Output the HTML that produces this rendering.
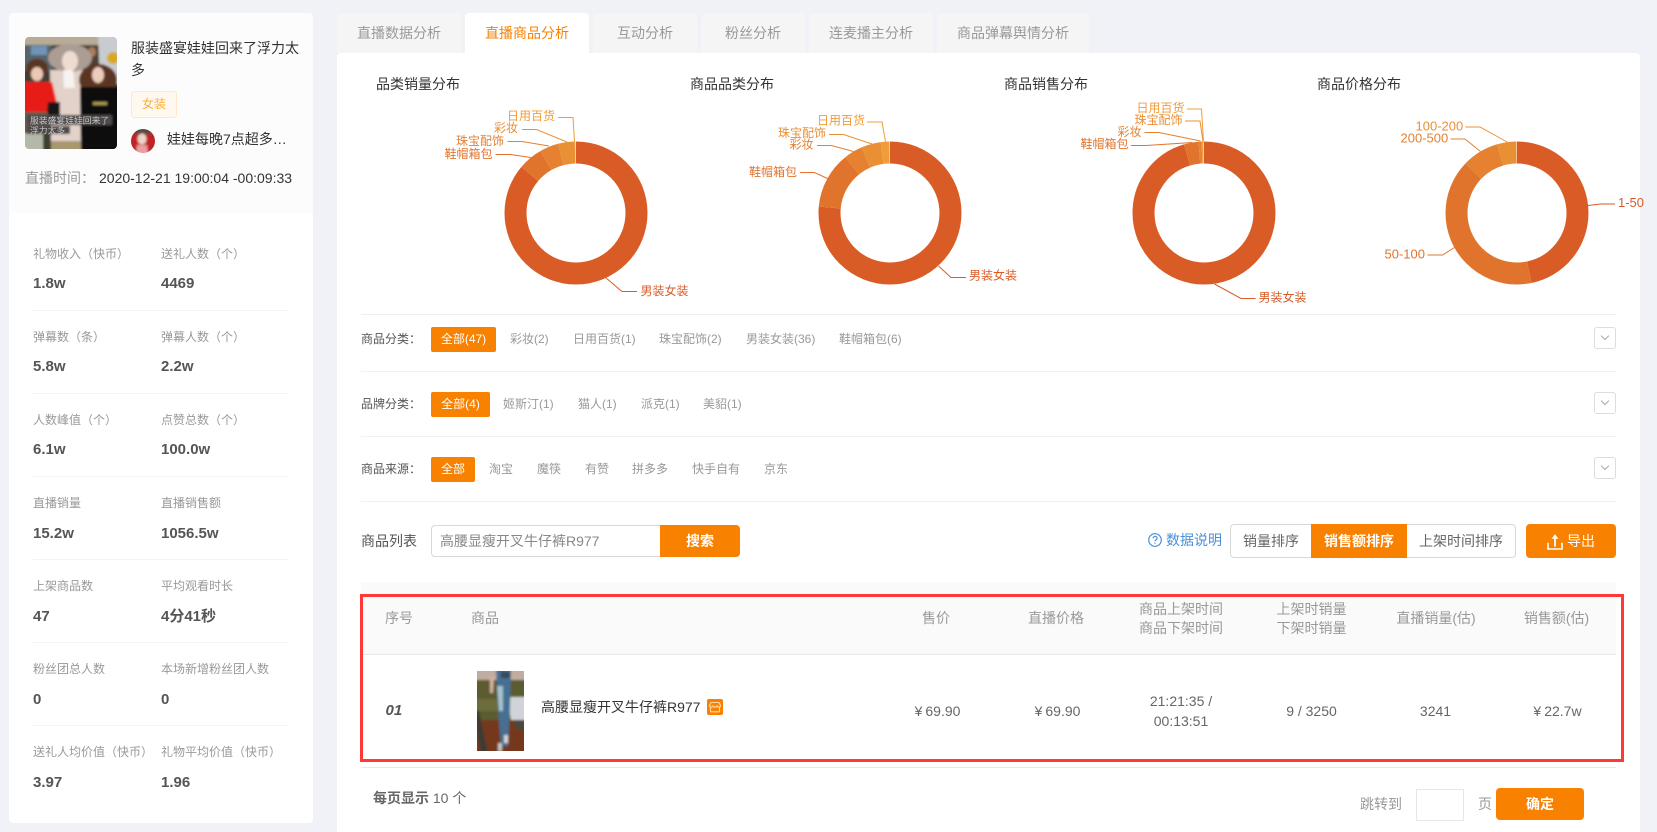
<!DOCTYPE html>
<html lang="zh"><head><meta charset="utf-8"><title>直播商品分析</title>
<style>
html,body{margin:0;padding:0;width:1657px;height:832px;overflow:hidden}
body{position:relative;background:#f0f2f7;font-family:"Liberation Sans","Noto Sans CJK SC",sans-serif;font-size:14px;color:#333}
.b,.t{position:absolute;box-sizing:border-box}
.t{white-space:nowrap;line-height:20px;height:20px}
.c{transform:translateX(-50%);text-align:center}
.l{font-size:12px;color:#999}
.v{font-size:15px;font-weight:bold;color:#555}
.h{height:1px;background:#f3f3f3}
.tab{top:13px;height:40px;background:#f5f5f5;border-radius:4px 4px 0 0;color:#999;text-align:center;line-height:40px}
.f{font-size:12px;color:#999}
.fl{font-size:12px;color:#555}
.on{background:#f98100;color:#fff;font-size:12px;text-align:center;height:25px;line-height:25px;border-radius:2px;left:431px}
.ex{left:1594px;width:22px;height:22px;border:1px solid #ddd;border-radius:3px;background:#fff}
.ex:after{content:"";position:absolute;left:7px;top:5px;width:5px;height:5px;border-right:1px solid #aaa;border-bottom:1px solid #aaa;transform:rotate(45deg)}
.th{color:#999}
.td{color:#666}
.td i{font-style:normal;margin-right:3px}
svg text{font-family:"Liberation Sans","Noto Sans CJK SC",sans-serif;font-size:12px}
svg text.n{font-size:13px}
svg polyline{fill:none;stroke-width:1}
</style></head><body>

<!-- left cards -->
<div class="b" style="left:9px;top:13px;width:304px;height:205px;background:#fcfcfd;border-radius:4px"></div>
<svg class="b" style="left:25px;top:37px" width="92" height="112" viewBox="0 0 92 112">
<defs><filter id="bl" x="-10%" y="-10%" width="120%" height="120%"><feGaussianBlur stdDeviation="1"/></filter><clipPath id="cc"><rect width="92" height="112" rx="4"/></clipPath></defs>
<g clip-path="url(#cc)"><g filter="url(#bl)">
<rect x="-3" y="-3" width="98" height="118" fill="#3f3c30"/>
<rect x="-3" y="-3" width="98" height="11" fill="#b8ac98"/>
<rect x="-3" y="8" width="30" height="26" fill="#56646a"/>
<rect x="6" y="9" width="16" height="9" fill="#6f94b8"/>
<rect x="60" y="8" width="14" height="24" fill="#4e4232"/>
<ellipse cx="67" cy="15" rx="4" ry="5" fill="#a87c60"/>
<path d="M73 -3h22v50H75z" fill="#c8ccd0"/>
<circle cx="88" cy="21" r="6" fill="#d8a820"/>
<path d="M25 33h33l4 74H26z" fill="#e2d2ca"/>
<ellipse cx="45" cy="21" rx="22" ry="14" fill="#ab9c94"/>
<ellipse cx="45" cy="24" rx="8" ry="10" fill="#efdcd0"/>
<path d="M38 33h10l2 18H39z" fill="#f6f3f0"/>
<ellipse cx="12" cy="31" rx="11" ry="9" fill="#5a3424"/>
<ellipse cx="12" cy="37" rx="6" ry="7" fill="#ecc8b4"/>
<path d="M-3 45h30l7 30H-3z" fill="#e81e18"/>
<path d="M23 65h12v20H21z" fill="#141414"/>
<path d="M-3 75h26v20H-3z" fill="#6a5a48"/>
<ellipse cx="73" cy="43" rx="19" ry="16" fill="#5c3420"/>
<ellipse cx="73" cy="38" rx="6" ry="8" fill="#ecccbc"/>
<path d="M55 50h40v65H56z" fill="#100e0e"/>
<rect x="68" y="65" width="14" height="3" fill="#a89858"/>
<rect x="-3" y="96" width="21" height="19" fill="#b4b8a8"/>
<rect x="26" y="104" width="30" height="10" fill="#a89870"/>
<rect x="2" y="78" width="85" height="10" fill="#4e4a48"/>
<rect x="2" y="89" width="43" height="8" fill="#4e4a48"/>
</g></g>
<text x="5" y="86.500" style="font-size:8.800px" fill="#c4c4c4">服装盛宴娃娃回来了</text>
<text x="5" y="96.500" style="font-size:8.800px" fill="#c4c4c4">浮力太多</text>
</svg>
<div class="t" style="left:131px;top:38px">服装盛宴娃娃回来了浮力太</div>
<div class="t" style="left:131px;top:60px">多</div>
<div class="b" style="left:131px;top:91px;width:46px;height:27px;background:#fff8ee;border:1px solid #ffe8c8;border-radius:3px;color:#fdb02e;font-size:12px;text-align:center;line-height:25px">女装</div>
<svg class="b" style="left:131px;top:129px" width="24" height="24" viewBox="0 0 24 24">
<defs><clipPath id="av"><circle cx="12" cy="12" r="12"/></clipPath></defs>
<g clip-path="url(#av)"><g filter="url(#bl)"><rect x="-2" y="-2" width="28" height="28" fill="#c02028"/><rect x="-2" y="-2" width="28" height="7" fill="#5a4a3c"/><ellipse cx="11" cy="10" rx="4.500" ry="5.500" fill="#eed4c8"/><path d="M6 16h10l1 9H5z" fill="#e8a0a0"/></g></g>
</svg>
<div class="t" style="left:167px;top:129px">娃娃每晚7点超多…</div>
<div class="t" style="left:25px;top:168px;color:#999">直播时间：</div>
<div class="t" style="left:99px;top:168px">2020-12-21 19:00:04 -00:09:33</div>

<div class="b" style="left:9px;top:213px;width:304px;height:610px;background:#fff;border-radius:4px"></div>
<div class="t l" style="left:33px;top:244px">礼物收入（快币）</div><div class="t l" style="left:161px;top:244px">送礼人数（个）</div>
<div class="t v" style="left:33px;top:274px">1.8w</div><div class="t v" style="left:161px;top:274px">4469</div>
<div class="b h" style="left:33px;top:310px;width:256px"></div>
<div class="t l" style="left:33px;top:327px">弹幕数（条）</div><div class="t l" style="left:161px;top:327px">弹幕人数（个）</div>
<div class="t v" style="left:33px;top:357px">5.8w</div><div class="t v" style="left:161px;top:357px">2.2w</div>
<div class="b h" style="left:33px;top:393px;width:256px"></div>
<div class="t l" style="left:33px;top:410px">人数峰值（个）</div><div class="t l" style="left:161px;top:410px">点赞总数（个）</div>
<div class="t v" style="left:33px;top:440px">6.1w</div><div class="t v" style="left:161px;top:440px">100.0w</div>
<div class="b h" style="left:33px;top:476px;width:256px"></div>
<div class="t l" style="left:33px;top:493px">直播销量</div><div class="t l" style="left:161px;top:493px">直播销售额</div>
<div class="t v" style="left:33px;top:524px">15.2w</div><div class="t v" style="left:161px;top:524px">1056.5w</div>
<div class="b h" style="left:33px;top:559px;width:256px"></div>
<div class="t l" style="left:33px;top:576px">上架商品数</div><div class="t l" style="left:161px;top:576px">平均观看时长</div>
<div class="t v" style="left:33px;top:607px">47</div><div class="t v" style="left:161px;top:607px">4分41秒</div>
<div class="b h" style="left:33px;top:642px;width:256px"></div>
<div class="t l" style="left:33px;top:659px">粉丝团总人数</div><div class="t l" style="left:161px;top:659px">本场新增粉丝团人数</div>
<div class="t v" style="left:33px;top:690px">0</div><div class="t v" style="left:161px;top:690px">0</div>
<div class="b h" style="left:33px;top:725px;width:256px"></div>
<div class="t l" style="left:33px;top:742px">送礼人均价值（快币）</div><div class="t l" style="left:161px;top:742px">礼物平均价值（快币）</div>
<div class="t v" style="left:33px;top:773px">3.97</div><div class="t v" style="left:161px;top:773px">1.96</div>

<!-- tabs -->
<div class="b tab" style="left:337px;width:124px">直播数据分析</div>
<div class="b tab" style="left:593px;width:104px">互动分析</div>
<div class="b tab" style="left:701px;width:104px">粉丝分析</div>
<div class="b tab" style="left:809px;width:124px">连麦播主分析</div>
<div class="b tab" style="left:937px;width:152px">商品弹幕舆情分析</div>

<!-- panel -->
<div class="b" style="left:337px;top:53px;width:1303px;height:779px;background:#fff;border-radius:4px 4px 0 0"></div>
<div class="b tab" style="left:465px;width:124px;background:#fff;color:#f98100;height:42px">直播商品分析</div>

<div class="t" style="left:376px;top:74px">品类销量分布</div>
<div class="t" style="left:690px;top:74px">商品品类分布</div>
<div class="t" style="left:1004px;top:74px">商品销售分布</div>
<div class="t" style="left:1317px;top:74px">商品价格分布</div>

<!-- donuts -->
<svg class="b" style="left:0;top:0" width="1657" height="320" viewBox="0 0 1657 320">
<g fill="none" stroke-width="22" transform="translate(576 213) rotate(-90)">
<circle r="60.5" pathLength="360" stroke="#d95c27" stroke-dasharray="310.6 360"/>
<circle r="60.5" pathLength="360" stroke="#e0742d" stroke-dasharray="20 360" stroke-dashoffset="-310.6"/>
<circle r="60.5" pathLength="360" stroke="#e68131" stroke-dasharray="15.3 360" stroke-dashoffset="-330.6"/>
<circle r="60.5" pathLength="360" stroke="#ea9034" stroke-dasharray="13.6 360" stroke-dashoffset="-345.9"/>
<circle r="60.5" pathLength="360" stroke="#f4a83f" stroke-dasharray="0.5 360" stroke-dashoffset="-359.5"/>
</g>
<g fill="none" stroke-width="22" transform="translate(890 213) rotate(-90)">
<circle r="60.5" pathLength="360" stroke="#d95c27" stroke-dasharray="275.6 360"/>
<circle r="60.5" pathLength="360" stroke="#e0742d" stroke-dasharray="46.1 360" stroke-dashoffset="-275.6"/>
<circle r="60.5" pathLength="360" stroke="#e68131" stroke-dasharray="15.2 360" stroke-dashoffset="-321.7"/>
<circle r="60.5" pathLength="360" stroke="#ea9034" stroke-dasharray="16 360" stroke-dashoffset="-336.9"/>
<circle r="60.5" pathLength="360" stroke="#f09c39" stroke-dasharray="7.1 360" stroke-dashoffset="-352.9"/>
</g>
<g fill="none" stroke-width="22" transform="translate(1204 213) rotate(-90)">
<circle r="60.5" pathLength="360" stroke="#d95c27" stroke-dasharray="344.1 360"/>
<circle r="60.5" pathLength="360" stroke="#e0742d" stroke-dasharray="11.9 360" stroke-dashoffset="-344.1"/>
<circle r="60.5" pathLength="360" stroke="#e68131" stroke-dasharray="2.4 360" stroke-dashoffset="-356"/>
<circle r="60.5" pathLength="360" stroke="#ea9034" stroke-dasharray="0.6 360" stroke-dashoffset="-358.4"/>
<circle r="60.5" pathLength="360" stroke="#f09c39" stroke-dasharray="1 360" stroke-dashoffset="-359"/>
</g>
<g fill="none" stroke-width="22" transform="translate(1517 213) rotate(-90)">
<circle r="60.5" pathLength="360" stroke="#d95c27" stroke-dasharray="168.5 360"/>
<circle r="60.5" pathLength="360" stroke="#e0742d" stroke-dasharray="145.7 360" stroke-dashoffset="-168.5"/>
<circle r="60.5" pathLength="360" stroke="#e68131" stroke-dasharray="30.1 360" stroke-dashoffset="-314.2"/>
<circle r="60.5" pathLength="360" stroke="#ea9034" stroke-dasharray="15.7 360" stroke-dashoffset="-344.3"/>
</g>

<polyline stroke="#f09c39" points="558,117.5 573,117.5 574.5,141.5"/><text x="507" y="120" fill="#f09c39">日用百货</text>
<polyline stroke="#ea9034" points="522,129.5 536.5,129.5 567,142"/><text x="494" y="132" fill="#ea9034">彩妆</text>
<polyline stroke="#e68131" points="507.5,141.5 522,141.5 549,146"/><text x="456" y="145" fill="#e68131">珠宝配饰</text>
<polyline stroke="#e0742d" points="495.5,154.5 510.5,154.5 531,157.5"/><text x="444.5" y="158" fill="#e0742d">鞋帽箱包</text>
<polyline stroke="#d95c27" points="605.5,277.5 622,291.5 637,291.5"/><text x="640.5" y="295" fill="#d95c27">男装女装</text>

<polyline stroke="#f09c39" points="867,122 882,122 885.5,141.5"/><text x="817" y="124.5" fill="#f09c39">日用百货</text>
<polyline stroke="#ea9034" points="829,134.5 843.5,134.5 872,144"/><text x="778" y="137" fill="#ea9034">珠宝配饰</text>
<polyline stroke="#e68131" points="817,145.5 831.5,145.5 853.5,151.5"/><text x="789.5" y="148.5" fill="#e68131">彩妆</text>
<polyline stroke="#e0742d" points="800,172.5 814.5,172.5 827.5,178.5"/><text x="749" y="176" fill="#e0742d">鞋帽箱包</text>
<polyline stroke="#d95c27" points="938.5,266 951,277.5 966,277.5"/><text x="969" y="279.5" fill="#d95c27">男装女装</text>

<polyline stroke="#f09c39" points="1187,109 1201.5,109 1203.5,141.5"/><text x="1136.5" y="112" fill="#f09c39">日用百货</text>
<polyline stroke="#ea9034" points="1185,121 1200,121 1203,141.5"/><text x="1134.5" y="124" fill="#ea9034">珠宝配饰</text>
<polyline stroke="#e68131" points="1144.5,132.5 1159,132.5 1200.5,141"/><text x="1117.5" y="136" fill="#e68131">彩妆</text>
<polyline stroke="#e0742d" points="1131,145.5 1146,145.5 1192.5,142.5"/><text x="1080.5" y="148" fill="#e0742d">鞋帽箱包</text>
<polyline stroke="#d95c27" points="1214.5,284 1241,298.5 1255.5,298.5"/><text x="1258.5" y="301.5" fill="#d95c27">男装女装</text>

<polyline stroke="#ea9034" points="1465.5,127 1480,127 1508,142.5"/><text class="n" x="1415.5" y="130.500" fill="#ea9034">100-200</text>
<polyline stroke="#e68131" points="1450.5,139 1465,139 1480.5,151.5"/><text class="n" x="1400.5" y="142.500" fill="#e68131">200-500</text>
<polyline stroke="#e0742d" points="1427.5,255 1442.5,255 1454.5,247.5"/><text class="n" x="1384.5" y="258.500" fill="#e0742d">50-100</text>
<polyline stroke="#d95c27" points="1588,205.5 1601,204 1615,204"/><text class="n" x="1618" y="207" fill="#d95c27">1-50</text>
</svg>

<!-- filters -->
<div class="b" style="left:361px;top:314px;width:1255px;height:1px;background:#eee"></div>
<div class="b" style="left:361px;top:371px;width:1255px;height:1px;background:#f1f1f1"></div>
<div class="b" style="left:361px;top:436px;width:1255px;height:1px;background:#f1f1f1"></div>
<div class="b" style="left:361px;top:501px;width:1255px;height:1px;background:#f1f1f1"></div>

<div class="t fl" style="left:361px;top:329px">商品分类：</div>
<div class="b on" style="top:327px;width:65px">全部(47)</div>
<div class="t f" style="left:510px;top:329px">彩妆(2)</div>
<div class="t f" style="left:573px;top:329px">日用百货(1)</div>
<div class="t f" style="left:659px;top:329px">珠宝配饰(2)</div>
<div class="t f" style="left:746px;top:329px">男装女装(36)</div>
<div class="t f" style="left:839px;top:329px">鞋帽箱包(6)</div>
<div class="b ex" style="top:327px"></div>

<div class="t fl" style="left:361px;top:394px">品牌分类：</div>
<div class="b on" style="top:392px;width:59px">全部(4)</div>
<div class="t f" style="left:503px;top:394px">姬斯汀(1)</div>
<div class="t f" style="left:578px;top:394px">猫人(1)</div>
<div class="t f" style="left:641px;top:394px">派克(1)</div>
<div class="t f" style="left:703px;top:394px">美貂(1)</div>
<div class="b ex" style="top:392px"></div>

<div class="t fl" style="left:361px;top:459px">商品来源：</div>
<div class="b on" style="top:457px;width:44px">全部</div>
<div class="t f" style="left:489px;top:459px">淘宝</div>
<div class="t f" style="left:537px;top:459px">魔筷</div>
<div class="t f" style="left:585px;top:459px">有赞</div>
<div class="t f" style="left:632px;top:459px">拼多多</div>
<div class="t f" style="left:692px;top:459px">快手自有</div>
<div class="t f" style="left:764px;top:459px">京东</div>
<div class="b ex" style="top:457px"></div>

<!-- search row -->
<div class="t" style="left:361px;top:531px;color:#555">商品列表</div>
<div class="b" style="left:431px;top:525px;width:234px;height:32px;border:1px solid #d8d8d8;border-radius:4px 0 0 4px;background:#fff"></div>
<div class="t" style="left:440px;top:531px;color:#888">高腰显瘦开叉牛仔裤R977</div>
<div class="b" style="left:660px;top:525px;width:80px;height:32px;background:#f98100;border-radius:0 4px 4px 0;color:#fff;text-align:center;line-height:32px;font-weight:bold">搜索</div>

<svg class="b" style="left:1148px;top:533px" width="14" height="14" viewBox="0 0 14 14" fill="none" stroke="#4a90d9" stroke-width="1.2"><circle cx="7" cy="7" r="6.3"/><path d="M5 5.4c0-1.2 1-2 2.1-2 1.2 0 2 .8 2 1.8 0 1.5-2.1 1.6-2.1 3.1"/><path d="M7 9.6v1.2"/></svg>
<div class="t" style="left:1166px;top:530px;color:#4a90d9">数据说明</div>
<div class="b" style="left:1230px;top:524px;width:286px;height:34px;border:1px solid #d8d8d8;border-radius:4px;background:#fff"></div>
<div class="t" style="left:1243px;top:531px;color:#666">销量排序</div>
<div class="b" style="left:1311px;top:524px;width:96px;height:34px;background:#f98100;color:#fff;text-align:center;line-height:34px;font-weight:bold">销售额排序</div>
<div class="t" style="left:1419px;top:531px;color:#666">上架时间排序</div>
<div class="b" style="left:1526px;top:524px;width:90px;height:34px;background:#f98100;border-radius:4px"></div>
<svg class="b" style="left:1547px;top:533px" width="16" height="17" viewBox="0 0 16 17"><path d="M1 9.700V16h14V9.700" fill="none" stroke="#fff" stroke-width="1.600"/><path d="M8 5v8.500" fill="none" stroke="#fff" stroke-width="1.800"/><path d="M4.500 5.800L8 1.200l3.500 4.600z" fill="#fff"/></svg>
<div class="t" style="left:1567px;top:531px;color:#fff">导出</div>

<!-- table -->
<div class="b" style="left:361px;top:582px;width:1255px;height:72px;background:#fafafa"></div>
<div class="b" style="left:361px;top:654px;width:1255px;height:1px;background:#e8e8e8"></div>
<div class="b" style="left:361px;top:767px;width:1255px;height:1px;background:#e8e8e8"></div>

<div class="t th" style="left:385px;top:608px">序号</div>
<div class="t th" style="left:471px;top:608px">商品</div>
<div class="t th c" style="left:936px;top:608px">售价</div>
<div class="t th c" style="left:1056px;top:608px">直播价格</div>
<div class="t th c" style="left:1181px;top:599px">商品上架时间</div>
<div class="t th c" style="left:1181px;top:618px">商品下架时间</div>
<div class="t th c" style="left:1311.5px;top:599px">上架时销量</div>
<div class="t th c" style="left:1311.5px;top:618px">下架时销量</div>
<div class="t th c" style="left:1436px;top:608px">直播销量(估)</div>
<div class="t th c" style="left:1556.5px;top:608px">销售额(估)</div>

<div class="t" style="left:385.5px;top:701px;font-size:15px;font-weight:bold;font-style:italic;color:#555">01</div>
<svg class="b" style="left:477px;top:671px" width="47" height="80" viewBox="0 0 47 80">
<defs><clipPath id="jc"><rect width="47" height="80"/></clipPath></defs>
<g clip-path="url(#jc)"><g filter="url(#bl)">
<rect x="-3" y="-3" width="53" height="86" fill="#5c5c32"/>
<rect x="-3" y="-3" width="53" height="12" fill="#c0aca0"/>
<rect x="-3" y="28" width="33" height="12" fill="#6c6c3c"/>
<rect x="-3" y="49" width="53" height="34" fill="#74381a"/>
<path d="M-3 40l5 0 9 43H4z" fill="#3c3a34"/>
<path d="M30 26h20v23H34z" fill="#d0d4d8"/>
<path d="M36 49h14v10H40z" fill="#4a4a3c"/>
<path d="M13 6l4 0-1 16h-3z" fill="#d8b0a0"/>
<path d="M19 -3h15l-1 40-2 38h-7l-3-38z" fill="#456f92"/>
<path d="M20 15h6v25h-4z" fill="#a6c0cc"/>
<rect x="24" y="1" width="9" height="6" fill="#38485a"/>
<rect x="27" y="64" width="4" height="8" fill="#d4d4d4"/>
<rect x="21" y="72" width="4" height="8" fill="#c4c4c4"/>
</g></g>
</svg>
<div class="t" style="left:541px;top:697px;color:#333">高腰显瘦开叉牛仔裤R977</div>
<svg class="b" style="left:707px;top:699px" width="16" height="16" viewBox="0 0 16 16"><rect width="16" height="16" rx="2" fill="#f98100"/><path d="M4 3.500h8l1.500 3c0 1-.8 1.600-1.700 1.600S10.200 7.500 10 7c-.2.500-1 1.100-2 1.100S6.200 7.500 6 7c-.2.500-.9 1.100-1.800 1.100S2.500 7.500 2.500 6.500z" fill="none" stroke="#ffd9a8" stroke-width="1.100"/><path d="M3.500 8.500V12c0 .5.300.8.800.8h7.400c.5 0 .8-.3.800-.8V8.500" fill="none" stroke="#ffd9a8" stroke-width="1.100"/></svg>

<div class="t td c" style="left:937.500px;top:701px"><i>¥</i>69.90</div>
<div class="t td c" style="left:1057.500px;top:701px"><i>¥</i>69.90</div>
<div class="t td c" style="left:1181px;top:691px">21:21:35 /</div>
<div class="t td c" style="left:1181px;top:711px">00:13:51</div>
<div class="t td c" style="left:1311.500px;top:701px">9 / 3250</div>
<div class="t td c" style="left:1435.500px;top:701px">3241</div>
<div class="t td c" style="left:1557.500px;top:701px"><i>¥</i>22.7w</div>

<!-- red box -->
<div class="b" style="left:360px;top:594px;width:1264px;height:168px;border:3px solid #ff3838"></div>

<!-- footer -->
<div class="t" style="left:373px;top:788px;color:#666"><b style="font-weight:bold">每页显示</b> 10 个</div>
<div class="t" style="left:1360px;top:794px;color:#999">跳转到</div>
<div class="b" style="left:1416px;top:789px;width:48px;height:32px;border:1px solid #e4e7ed;background:#fff"></div>
<div class="t" style="left:1478px;top:794px;color:#999">页</div>
<div class="b" style="left:1496px;top:788px;width:88px;height:32px;background:#f98100;border-radius:4px;color:#fff;text-align:center;line-height:32px;font-weight:bold;font-size:14px">确定</div>
</body></html>
